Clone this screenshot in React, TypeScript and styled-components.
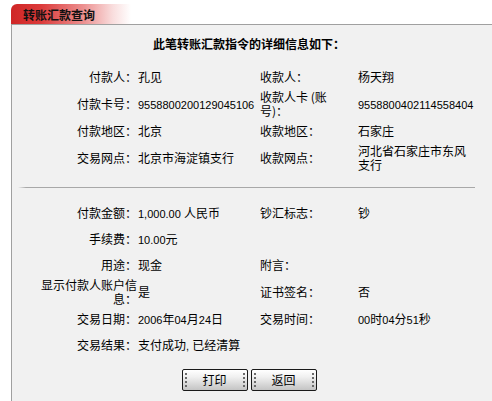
import React from 'react';
import styled, { createGlobalStyle } from 'styled-components';

type Row = [string, string, string, string];

const transferRows: Row[] = [
	['付款人：', '孔见', '收款人：', '杨天翔'],
	['付款卡号：', '9558800200129045106', '收款人卡 (账号)：', '9558800402114558404'],
	['付款地区：', '北京', '收款地区：', '石家庄'],
	['交易网点：', '北京市海淀镇支行', '收款网点：', '河北省石家庄市东风支行'],
];

const detailRows: Row[] = [
	['付款金额：', '1,000.00 人民币', '钞汇标志：', '钞'],
	['手续费：', '10.00元', '', ''],
	['用途：', '现金', '附言：', ''],
	['显示付款人账户信息：', '是', '证书签名：', '否'],
	['交易日期：', '2006年04月24日', '交易时间：', '00时04分51秒'],
	['交易结果：', '支付成功, 已经清算', '', ''],
];

// digits in the old page are half-width, so render runs of them in a narrow latin face
const MixedText = ({ text }: { text: string }) => (
	<>
		{text.split(/([0-9.,]+ ?)/).map((part, i) =>
			i % 2 ? <Digits key={i}>{part}</Digits> : part
		)}
	</>
);

const DetailGrid = ({ rows }: { rows: Row[] }) => (
	<StyledGrid>
		{rows.map((row, i) => (
			<React.Fragment key={i}>
				<LabelCell>{row[0]}</LabelCell>
				<ValueCell>
					<MixedText text={row[1]} />
				</ValueCell>
				<LabelCell $left>{row[2]}</LabelCell>
				<ValueCell>
					<MixedText text={row[3]} />
				</ValueCell>
			</React.Fragment>
		))}
	</StyledGrid>
);

export default function App() {
	return (
		<>
			<GlobalStyle />
			<StyledPage>
				<StyledTab>转账汇款查询</StyledTab>
				<StyledPanel>
					<StyledTitle>此笔转账汇款指令的详细信息如下：</StyledTitle>
					<DetailGrid rows={transferRows} />
					<StyledDivider />
					<DetailGrid rows={detailRows} />
					<StyledActions>
						<StyledButton type="button">打印</StyledButton>
						<StyledButton type="button">返回</StyledButton>
					</StyledActions>
				</StyledPanel>
			</StyledPage>
		</>
	);
}

const GlobalStyle = createGlobalStyle`
	html, body {
		margin: 0;
		padding: 0;
		background: #ffffff;
		overflow: hidden;
	}
	body {
		font-family: "Noto Sans CJK SC", sans-serif;
		font-size: 12px;
		color: #000000;
	}
`;

const StyledPage = styled.div`
	padding: 4px 0 0 11px;
`;

const StyledTab = styled.div`
	width: 120px;
	height: 20px;
	box-sizing: border-box;
	padding-left: 12px;
	border-top-left-radius: 6px;
	background: linear-gradient(
		to right,
		#cf2626 0%,
		#dc3a3a 25%,
		#ec8f8f 60%,
		#f9dede 85%,
		#ffffff 100%
	);
	font-weight: bold;
	font-size: 12px;
	line-height: 21px;
	color: #111111;
`;

const StyledPanel = styled.div`
	border-top: 1px solid #a0a0a0;
	border-left: 1px solid #a0a0a0;
	background: #f1f1f1;
	padding: 12px 6px 24px 0;
`;

const StyledTitle = styled.div`
	text-align: center;
	font-weight: bold;
	line-height: 14px;
	margin-bottom: 13px;
`;

const StyledGrid = styled.div`
	display: grid;
	grid-template-columns: 100px 122px 98px 118px;
	grid-auto-rows: minmax(26px, auto);
	align-items: center;
	margin-left: 25px;
	line-height: 14px;
`;

const LabelCell = styled.div<{ $left?: boolean }>(
	({ $left }) => `
	text-align: ${$left ? 'left' : 'right'};
	padding: ${$left ? '0 20px 0 1px' : '0'};
	`
);

const ValueCell = styled.div`
	padding-left: 1px;
`;

const Digits = styled.span`
	font-family: "Liberation Sans", Arial, sans-serif;
	font-size: 11px;
	white-space: pre;
`;

const StyledDivider = styled.div`
	height: 1px;
	margin: 15px 11px 12px 6px;
	background: linear-gradient(to right, #f1f1f1 0, #a8a8a8 8px, #a8a8a8 100%);
`;

const StyledActions = styled.div`
	display: flex;
	justify-content: center;
	gap: 3px;
	margin-top: 11px;
`;

const StyledButton = styled.button`
	position: relative;
	width: 66px;
	height: 22px;
	padding: 0;
	border: 1px solid #1a1a1a;
	border-radius: 2px;
	background: linear-gradient(to bottom, #ffffff 0%, #f0f0f0 35%, #c4c4c4 100%);
	font-family: "Noto Sans CJK SC", sans-serif;
	font-size: 12px;
	color: #000000;
	line-height: 20px;

	&::before,
	&::after {
		content: '';
		position: absolute;
		top: 3px;
		width: 2px;
		height: 14px;
		background: repeating-linear-gradient(
			to bottom,
			#6a6a6a 0,
			#6a6a6a 2px,
			transparent 2px,
			transparent 4px
		);
	}
	&::before {
		left: 2px;
	}
	&::after {
		right: 2px;
	}
`;
